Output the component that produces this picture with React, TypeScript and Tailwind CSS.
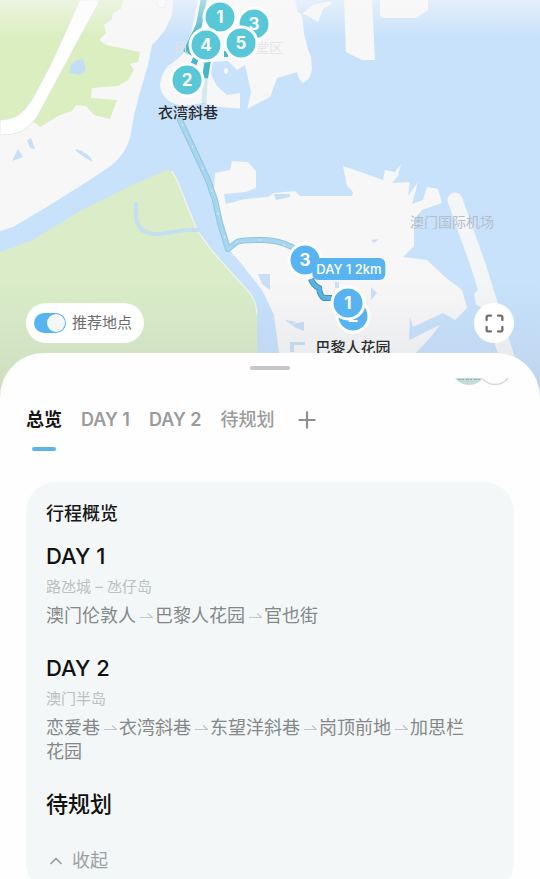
import React, { useState } from 'react';
import { ChevronUp, Maximize, Plus } from 'lucide-react';

const MAP_W = 540;
const MAP_H = 400;

type Pin = { label: string; x: number; y: number; day: 1 | 2 };

const pins: Pin[] = [
  { label: '3', x: 254, y: 24, day: 2 },
  { label: '1', x: 220, y: 17, day: 2 },
  { label: '4', x: 206, y: 45, day: 2 },
  { label: '5', x: 241, y: 43, day: 2 },
  { label: '2', x: 187, y: 80, day: 2 },
  { label: '3', x: 305, y: 260, day: 1 },
  { label: '2', x: 353, y: 316, day: 1 },
  { label: '1', x: 348, y: 303, day: 1 },
];

const days = [
  { title: 'DAY 1', area: '路氹城 – 氹仔岛', stops: ['澳门伦敦人', '巴黎人花园', '官也街'] },
  { title: 'DAY 2', area: '澳门半岛', stops: ['恋爱巷', '衣湾斜巷', '东望洋斜巷', '岗顶前地', '加思栏花园'] },
];

const tabs = ['总览', 'DAY 1', 'DAY 2', '待规划'];

const at = (x: number, y: number) => ({
  left: `${(x / MAP_W) * 100}%`,
  top: `${(y / MAP_H) * 100}%`,
});

function MapDrawing() {
  return (
    <svg viewBox="0 0 540 400" className="block w-full h-auto" aria-hidden="true">
      <defs>
        <linearGradient id="topFade" x1="0" y1="0" x2="0" y2="1">
          <stop offset="0" stopColor="#f8f8f8" stopOpacity="0.6" />
          <stop offset="1" stopColor="#f8f8f8" stopOpacity="0" />
        </linearGradient>
        <linearGradient id="bottomFade" x1="0" y1="0" x2="0" y2="1">
          <stop offset="0" stopColor="#808890" stopOpacity="0" />
          <stop offset="1" stopColor="#808890" stopOpacity="0.16" />
        </linearGradient>
      </defs>
      <rect width="540" height="400" fill="#c8e2fc" />

      {/* Zhuhai side */}
      <path d="M0 0H173L172 15L165 30L157 40L152 45L148 65L140 92L134 115L130 138Q126 153 112 165L88 181L50 205L13 227L0 231Z" fill="#f7f7f8" />
      <path d="M157 -2V4Q158 8 162 8Q166 8 166 4V-2" fill="#fbfbfb" stroke="#e2e6ea" />
      <path d="M0 0H123L121 9L113 13L112 19L104 25L106 33L99 40L106 45L140 52L138 62L130 64L134 70L128 80L118 86L92 88L91 98L117 100L110 119L94 115L86 106L76 105L72 111L58 116L40 127L34 122L0 126Z" fill="#daeebf" />
      <path d="M80 0L50 66L33 98Q26 110 17 116Q9 120 0 120V135Q12 135 20 132Q30 127 37 117L53 87L100 0Z" fill="#fff" stroke="#dfe5dc" strokeWidth="0.8" />
      <path d="M76 60L83 59L86 70L80 75L69 73L71 65Z" fill="#c3ddf5" />
      <path d="M27 140L31 138L35 149L30 148ZM18 149L23 157L12 161ZM76 149Q90 153 93 162Q84 158 76 151Z" fill="#c8e0f6" />

      {/* Hengqin */}
      <path d="M0 252L33 240L80 211L143 180L167 170L172 172L177 180L197 230L213 252L250 293Q257 303 257 315V400H0Z" fill="#daedc8" />
      <path d="M172 171L177 180L197 230L213 252L250 293Q257 303 257 315" fill="none" stroke="#f1f5ee" strokeWidth="1.2" />
      <path d="M136 204V216Q137 229 146 232Q156 236 166 233L187 230H198" fill="none" stroke="#c3dff1" strokeWidth="4" strokeLinecap="round" />

      {/* Macau peninsula */}
      <path d="M198 0H295L298 12L302 15L304 33L307 46L311 57L312 70Q310 80 303 83Q299 80 297 72L277 78L270 97L247 109L220 107L203 103L185 106Q163 104 160 86Q160 76 168 66L180 57L188 48Z" fill="#f7f7f8" />
      <path d="M213 62L228 61L237 70L245 65L251 92L247 110H240V93L227 95L217 86L211 74Z" fill="#c8e2fc" />
      <path d="M302 14L313 5L330 1L332 4L323 9L318 22L308 16Z" fill="#f7f7f8" />
      <ellipse cx="226" cy="71" rx="2" ry="3" fill="#f7f7f8" />
      <path d="M344 0L346 52L362 60H375L372 0ZM380 0V16L383 18H416L428 10V0Z" fill="#f7f7f8" />

      {/* Taipa and Cotai */}
      <path d="M214 190L215 173L230 170L232 161L248 162L256 171V188L246 192L224 194L226 204L245 199L268 197L274 193L295 191L300 196L352 196L353 192L347 186L343 166L372 176L383 180L385 170L395 172L401 164L398 176L392 183L410 182L408 196L418 182L412 204L423 200L427 187L438 189L442 203L422 210L414 220L414 246L403 257L427 260L445 277L462 290L467 308L455 320L443 313L413 327L410 340L425 332L440 325L430 338L407 362V400H279V353L274 315L262 290L240 262L229 250L219 222Z" fill="#f7f7f8" />
      <path d="M410 317L413 327L428 322L442 314L436 323L412 334L409 341Z" fill="#c8e2fc" />
      <path d="M258 274H270V290L262 284ZM274 194H290V197L276 200ZM371 240L379 239L374 243ZM371 287L377 293L371 300ZM335 282H339V288H335ZM285 320L297 322L291 324L304 322V331L296 328ZM290 342H305V345H294V352H290Z" fill="#c8dff5" />
      <path d="M455 200L478 265L490 303L514 380" fill="none" stroke="#f4f5f7" strokeWidth="15" strokeLinecap="round" />
      <path d="M474 294L481 286L485 309L476 305Z" fill="#f4f5f7" />

      {/* Routes */}
      <path d="M203 0L199 26L187 50L206 60L204 104" fill="none" stroke="#45b5c8" strokeWidth="5" strokeLinejoin="round" opacity="0.2" />
      <path d="M204 -2L199 25L187 50L200 56M196 58L192 68M208 60L205 78M224 54H228" fill="none" stroke="#45b7c8" strokeWidth="6" />
      <path d="M180 120L208 180L215 200L220 223L228 249L237 242Q240 240 263 240Q278 240 292 247" fill="none" stroke="#8fc7e0" strokeWidth="6" strokeLinecap="round" strokeLinejoin="round" />
      <path d="M180 120L208 180L215 200L220 223L228 249L237 242Q240 240 263 240Q278 240 292 247" fill="none" stroke="#a8d6ee" strokeWidth="4" strokeLinecap="round" strokeLinejoin="round" />
      <path d="M182 124L208 180L215 200L220 223L228 249L237 242Q240 240 263 240L292 247" fill="none" stroke="#e5f4fc" strokeWidth="1" strokeDasharray="2 22" />
      <path d="M311 279Q313 285 319 288Q320 296 324 298H332" fill="none" stroke="#3b93bd" strokeWidth="6" />
      <path d="M311 279Q313 285 319 288Q320 296 324 298H332" fill="none" stroke="#5ab2e4" strokeWidth="4" />

      <rect width="540" height="38" fill="url(#topFade)" />
      <rect y="280" width="540" height="120" fill="url(#bottomFade)" />
    </svg>
  );
}

function StopArrow() {
  return (
    <svg width="13" height="8" viewBox="0 0 13 8" className="inline-block ml-1 mr-0.5 align-middle" aria-hidden="true">
      <path d="M0 4.5H12.5L8 0.5" fill="none" stroke="#c3c7c9" strokeWidth="1.2" strokeLinejoin="round" />
    </svg>
  );
}

function TripMap() {
  const [recommended, setRecommended] = useState(true);

  return (
    <section className="relative shrink-0 overflow-hidden">
      <MapDrawing />

      <span className="absolute -translate-x-1/2 -translate-y-1/2 whitespace-nowrap text-[14px] leading-5 text-[#b5bfc9]" style={at(452, 222)}>
        澳门国际机场
      </span>
      <span className="absolute -translate-x-1/2 -translate-y-1/2 whitespace-nowrap text-[14px] leading-5 text-[#e3e5e8]" style={at(181, 48)}>
        风
      </span>
      <span className="absolute -translate-x-1/2 -translate-y-1/2 whitespace-nowrap text-[14px] leading-5 text-[#e3e5e8]" style={at(269, 48)}>
        堂区
      </span>

      {pins.map((pin) => (
        <span
          key={`${pin.day}-${pin.label}`}
          className={`absolute flex size-[35px] -translate-x-1/2 -translate-y-1/2 items-center justify-center rounded-full border-[3px] border-white text-[17px] font-bold text-white ${
            pin.day === 1 ? 'bg-[#58b4f0]' : 'bg-[#58c8d9]'
          }`}
          style={at(pin.x, pin.y)}
        >
          {pin.label}
        </span>
      ))}

      <span className="absolute -translate-x-1/2 -translate-y-1/2 whitespace-nowrap rounded-md bg-[#58b4f0] px-1 text-[13px] font-medium leading-[22px] text-white" style={at(349, 269)}>
        DAY 1 2km
      </span>
      <span className="absolute -translate-x-1/2 -translate-y-1/2 whitespace-nowrap text-[15px] font-medium leading-5 text-[#2b2d30]" style={at(188, 113)}>
        衣湾斜巷
      </span>
      <span className="absolute -translate-x-1/2 -translate-y-1/2 whitespace-nowrap text-[15px] font-medium leading-5 text-[#2b2d30]" style={at(353, 348)}>
        巴黎人花园
      </span>

      {/* Map controls */}
      <div className="absolute inset-x-[26px] bottom-[57px] flex items-center justify-between">
        <label className="flex h-10 items-center gap-1.5 rounded-full bg-white pl-2 pr-3 text-[15px] text-[#6b6b6b]">
          <input
            type="checkbox"
            role="switch"
            checked={recommended}
            onChange={(e) => setRecommended(e.target.checked)}
            className="flex h-5 w-8 appearance-none items-center rounded-full bg-gray-300 p-px before:size-[18px] before:rounded-full before:bg-[#f5f6f8] checked:justify-end checked:bg-[#58b4f0]"
          />
          推荐地点
        </label>
        <button aria-label="全屏" className="flex size-10 items-center justify-center rounded-full bg-white text-[#707070]">
          <Maximize size={21} strokeWidth={2.6} />
        </button>
      </div>
    </section>
  );
}

function App() {
  const [activeTab, setActiveTab] = useState('总览');

  const tabStyle = (tab: string) => {
    if (tab === activeTab) return 'font-bold text-[#161616]';
    return tab.startsWith('DAY') ? 'font-semibold text-[#9b9b9b]' : 'font-medium text-[#9b9b9b]';
  };

  return (
    <div className="flex h-screen flex-col overflow-hidden bg-white font-['Inter','Noto_Sans_CJK_SC',sans-serif]">
      <TripMap />

      {/* Bottom sheet */}
      <main className="relative -mt-[47px] min-h-0 flex-1 overflow-y-auto rounded-t-[44px] bg-[#fefefe] px-[26px] pt-[13px] [scrollbar-width:none]">
        <div className="mx-auto h-1 w-10 rounded-full bg-[#c6c6c6]" />

        <div className="mt-2 flex h-2 justify-end pr-1">
          <svg width="56" height="8" viewBox="0 0 56 8" aria-hidden="true">
            <path d="M1 0H29Q24 7 15 7Q6 7 1 0Z" fill="#c5dbd9" />
            <path d="M4 1.5H26" stroke="#8fb0ae" strokeDasharray="3 1 2 2" />
            <path d="M29 1Q34 6.5 41 6.5Q49 6.5 54 0" fill="none" stroke="#d5d9da" strokeWidth="1.5" />
          </svg>
        </div>

        <nav className="mt-[22px] flex items-start gap-[19px]">
          {tabs.map((tab) => (
            <button
              key={tab}
              onClick={() => setActiveTab(tab)}
              className={`flex flex-col items-center gap-[15px] whitespace-nowrap text-[18px] leading-6 ${tabStyle(tab)}`}
            >
              {tab}
              <span className={`h-1 w-6 rounded-full ${tab === activeTab ? 'bg-[#5bb5e6]' : 'bg-transparent'}`} />
            </button>
          ))}
          <button aria-label="添加" className="flex h-6 items-center text-[#8f8f8f]">
            <Plus size={26} strokeWidth={2} />
          </button>
        </nav>

        <section className="mt-[31px] rounded-[30px] bg-[#f3f7f8] py-5 pl-5 pr-10">
          <h2 className="text-[18px] font-medium leading-6 text-[#161616]">行程概览</h2>
          <div className="mt-4 flex flex-col gap-[26px]">
            {days.map((day) => (
              <article key={day.title}>
                <h3 className="text-[22px] font-medium leading-7 text-[#111]">{day.title}</h3>
                <p className="mt-2 text-[15px] leading-[18px] text-[#bcc0c1]">{day.area}</p>
                <p className="mt-2 text-[18px] leading-6 text-[#858889]">
                  {day.stops.map((stop, i) => (
                    <React.Fragment key={stop}>
                      {i > 0 && <StopArrow />}
                      {stop}
                    </React.Fragment>
                  ))}
                </p>
              </article>
            ))}
            <h3 className="text-[22px] font-medium leading-7 text-[#111]">待规划</h3>
          </div>
          <button className="mt-8 flex items-center gap-1.5 text-[18px] leading-[22px] text-[#9da0a1]">
            <ChevronUp size={20} strokeWidth={2} />
            收起
          </button>
        </section>
      </main>
    </div>
  );
}

export default App;
